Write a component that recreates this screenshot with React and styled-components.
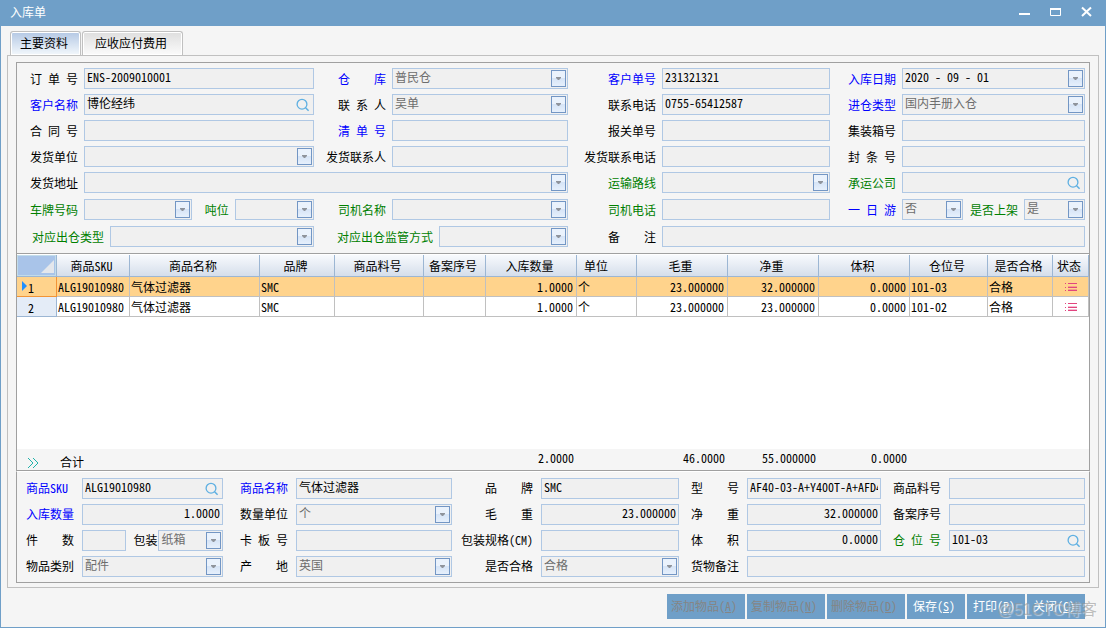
import React, { useId } from 'react';
import styled, { createGlobalStyle, css } from 'styled-components';

const BLUE = '#0000ff';
const GREEN = '#008000';

const GlobalStyle = createGlobalStyle`
  * {
    box-sizing: border-box;
  }
  body {
    margin: 0;
    background: #f5f5f5;
  }
  body, input, select, button, table {
    font-family: "Noto Sans CJK SC", "Liberation Sans", sans-serif;
    font-feature-settings: "hwid";
    font-size: 12px;
    line-height: 16px;
    color: #000;
  }
`;

const Window = styled.div`
  position: relative;
  display: flex;
  flex-direction: column;
  min-height: 100vh;
  background: #f5f5f5;
  border: 1px solid #6f9fc8;
  border-top: 0;
`;
const TitleBar = styled.header`
  display: flex;
  align-items: center;
  justify-content: space-between;
  height: 26px;
  padding: 0 8px 2px 9px;
  background: #6f9fc8;
`;
const Title = styled.h1`
  margin: 0;
  font-size: 12px;
  font-weight: 400;
  color: #fff;
`;
const WindowButtons = styled.div`
  display: flex;
  gap: 11px;
`;
const WindowButton = styled.button`
  display: flex;
  align-items: center;
  justify-content: center;
  width: 20px;
  height: 20px;
  padding: 0;
  border: 0;
  background: none;
`;
const Tabs = styled.div`
  display: flex;
  gap: 1px;
  padding: 5px 9px 0;
`;
const Tab = styled.button`
  height: 24px;
  padding: ${(props) => (props.$active ? '0 12px 2px 9px' : '0 15px 2px 12px')};
  border: 1px solid #c0c0c0;
  border-bottom: 0;
  border-radius: 3px 3px 0 0;
  box-shadow: inset 0 0 0 1px #fff;
  background: ${(props) =>
    props.$active
      ? 'linear-gradient(#b4c8e4, #f3f8fc)'
      : 'linear-gradient(#dedede, #fbfbfb)'};
`;
const Pane = styled.main`
  display: flex;
  flex: 1;
  flex-direction: column;
  margin: 0 6px;
  padding: 6px 8px 4px;
  border: 1px solid #c0c0c0;
`;

const Panel = styled.section`
  display: grid;
  padding-right: 4px;
  border: 1px solid #a0a0a0;
  align-items: end;
`;
const OrderPanel = styled(Panel)`
  grid-template-columns:
    67px minmax(0, 230fr) 78px minmax(0, 176fr)
    94px minmax(0, 168fr) 72px minmax(0, 183fr);
  grid-template-rows: repeat(5, 26px) repeat(2, 27px);
  padding-bottom: 6px;
`;
const ItemPanel = styled(Panel)`
  grid-template-columns:
    65px minmax(0, 141fr) 73px minmax(0, 156fr) 89px minmax(0, 138fr)
    68px minmax(0, 134fr) 68px minmax(0, 136fr);
  grid-template-rows: repeat(4, 26px);
  padding-top: 1px;
  padding-bottom: 5px;
  border-top-color: #fff;
`;

const Label = styled.label`
  display: flex;
  flex: none;
  align-items: center;
  justify-content: flex-end;
  width: ${(props) => props.$width || 'auto'};
  height: 21px;
  padding-right: 6px;
  color: ${(props) => props.$color || '#000'};
  white-space: nowrap;

  ${ItemPanel} & {
    padding-right: ${(props) => (props.$tight ? '1px' : '8px')};
    padding-bottom: 2px;
  }
`;
const LabelText = styled.span`
  min-width: ${(props) => (props.$short ? '24px' : '48px')};
  text-align-last: ${(props) => (props.$spread ? 'justify' : 'left')};
`;
const Group = styled.div`
  display: flex;
  min-width: 0;
  grid-column: span ${(props) => props.$span || 1};
`;
const Box = styled.div`
  display: grid;
  grid-template-columns: minmax(0, 1fr);
  flex: ${(props) => props.$grow || 1} 1 0;
  min-width: 0;
  height: 21px;
  border: 1px solid #b0c8e4;
  background: #f0f0f0;
  grid-column: span ${(props) => props.$span || 1};
`;
const control = css`
  grid-area: 1 / 1;
  width: 100%;
  height: 19px;
  margin: 0;
  border: 0;
  outline: 0;
  border-radius: 0;
  background: none;
`;
const Input = styled.input`
  ${control}
  padding: 0 ${(props) => (props.$icon ? '22px' : '2px')} 4px 2px;
  text-align: ${(props) => (props.$right ? 'right' : 'left')};
`;
const Select = styled.select`
  ${control}
  appearance: none;
  padding: 0 18px 4px 2px;
  color: #6d6d6d;
`;
const Arrow = styled.span`
  grid-area: 1 / 1;
  display: flex;
  align-items: center;
  justify-content: center;
  width: 15px;
  height: 17px;
  margin: 1px;
  justify-self: end;
  border: 1px solid #7396c4;
  background: linear-gradient(#eaf2fc 45%, #d5e3f6 45%, #e6f0fc);
  pointer-events: none;
`;
const SearchButton = styled.button`
  grid-area: 1 / 1;
  display: flex;
  align-items: center;
  justify-content: center;
  justify-self: end;
  width: 21px;
  height: 19px;
  padding: 0;
  border: 0;
  background: none;
`;

const GridArea = styled.section`
  display: flex;
  flex: 1;
  flex-direction: column;
  min-height: 195px;
  padding-top: 1px;
  border: 1px solid #a0a0a0;
  border-top: 0;
  background: #fff;
`;
const Table = styled.table`
  width: 100%;
  table-layout: fixed;
  border-collapse: separate;
  border-spacing: 0;
`;
const HeadCell = styled.th`
  height: 22px;
  padding: ${(props) => (props.$left ? '0 7px' : '0 3px 0 0')};
  border-right: 1px solid #9cb6d3;
  border-bottom: 1px solid #9cb6d3;
  background: linear-gradient(#f8fafd, #d5deeb);
  font-weight: 400;
  text-align: ${(props) => (props.$left ? 'left' : 'center')};
  white-space: nowrap;
`;
const Corner = styled(HeadCell)`
  padding: 0 2px 0 0;
  background: #a9c4e9;
  box-shadow: inset 0 0 0 1px #c2dcea;
  text-align: right;
  line-height: 0;
`;
const Cell = styled.td`
  height: 20px;
  padding: 0 ${(props) => (props.$right ? '3px' : '1px')};
  border-right: 1px solid #c0c0c0;
  border-bottom: 1px solid #c0c0c0;
  text-align: ${(props) => (props.$right ? 'right' : 'left')};
  white-space: nowrap;
  overflow: hidden;
`;
const Row = styled.tr`
  background: ${(props) => (props.$current ? '#ffd38c' : '#fff')};
`;
const RowHead = styled.th`
  height: 20px;
  padding: 2px 0 0 5px;
  border-right: 1px solid ${(props) => (props.$current ? '#f29436' : '#9cb6d3')};
  border-bottom: 1px solid ${(props) => (props.$current ? '#f29436' : '#9cb6d3')};
  background: ${(props) => (props.$current ? '#ffd38c' : '#e4ecf7')};
  font-weight: 400;
  text-align: left;
`;
const RowNumber = styled.span`
  display: flex;
  align-items: center;
  gap: 1px;
  padding-left: ${(props) => (props.$current ? '0' : '6px')};
`;
const Marker = styled.svg`
  margin-bottom: 3px;
`;
const StatusIcon = styled.svg`
  display: block;
  margin: 0 auto;
`;
const Totals = styled(Table)`
  margin-top: auto;
  background: #f5f5f5;
`;
const TotalCell = styled.td`
  height: 21px;
  padding: ${(props) => (props.$icon ? '0 0 2px 10px' : '1px 3px 0')};
  line-height: ${(props) => (props.$icon ? '0' : '16px')};
  text-align: ${(props) => (props.$left ? 'left' : 'right')};
  vertical-align: ${(props) => (props.$left ? 'bottom' : 'top')};
`;

const Actions = styled.footer`
  display: flex;
  justify-content: flex-end;
  gap: 2px;
  padding: 6px 20px 8px;
`;
const Action = styled.button`
  width: ${(props) => (props.$wide ? '78px' : '58px')};
  height: 25px;
  padding: 0 4px 2px 0;
  border: 0;
  background: #6f9fc8;
  color: #fff;
  white-space: nowrap;

  &:disabled {
    color: #858585;
  }
`;
const Watermark = styled.span`
  position: absolute;
  right: 8px;
  bottom: 5px;
  font-family: "Liberation Sans", "Noto Sans CJK SC", sans-serif;
  font-size: 16px;
  line-height: 24px;
  color: rgba(150, 150, 150, 0.6);
  text-shadow: 1px 1px 1px rgba(255, 255, 255, 0.5);
  pointer-events: none;
`;

const FieldLabel = ({ text, ...rest }) => (
  <Label {...rest}>
    <LabelText $spread={text.includes(' ')} $short={text.length < 3}>
      {text}
    </LabelText>
  </Label>
);

const ArrowMark = () => (
  <Arrow>
    <svg width="5" height="3" viewBox="0 0 5 3" aria-hidden="true">
      <path d="M0 0h5v1L3 3H2L0 1z" fill="#8f949c" />
    </svg>
  </Arrow>
);

const FieldBox = ({ id, kind, value = '', span, grow, right }) => (
  <Box $span={span} $grow={grow}>
    {kind === 'select' ? (
      <Select id={id} defaultValue={value}>
        <option value={value}>{value}</option>
      </Select>
    ) : (
      <Input
        id={id}
        type="text"
        defaultValue={value}
        $right={right}
        $icon={kind === 'search' || kind === 'date'}
      />
    )}
    {(kind === 'select' || kind === 'date') && <ArrowMark />}
    {kind === 'search' && (
      <SearchButton type="button" aria-label="查找">
        <svg width="14" height="14" viewBox="0 0 14 14" aria-hidden="true">
          <circle cx="6" cy="6.2" r="4.9" fill="none" stroke="#5fb0e2" strokeWidth="1.3" />
          <path d="M9.6 9.8l3 3" stroke="#5fb0e2" strokeWidth="1.5" />
        </svg>
      </SearchButton>
    )}
  </Box>
);

// label and box as two neighbouring grid cells
const Field = ({ label, color, ...box }) => {
  const id = useId();
  return (
    <>
      <FieldLabel htmlFor={id} text={label} $color={color} />
      <FieldBox id={id} {...box} />
    </>
  );
};

// two fields sharing the place of one
const PairField = ({ first, second, width, tight }) => {
  const firstId = useId();
  const secondId = useId();
  return (
    <>
      <FieldLabel htmlFor={firstId} text={first.label} $color={first.color} />
      <Group>
        <FieldBox id={firstId} {...first} />
        <FieldLabel
          htmlFor={secondId}
          text={second.label}
          $color={second.color}
          $width={width}
          $tight={tight}
        />
        <FieldBox id={secondId} {...second} />
      </Group>
    </>
  );
};

// field with a long label that runs over the label column
const WideField = ({ label, width, ...box }) => {
  const id = useId();
  return (
    <Group $span={2}>
      <FieldLabel htmlFor={id} text={label} $color={GREEN} $width={width} />
      <FieldBox id={id} {...box} />
    </Group>
  );
};

const columns = [
  { title: '商品SKU', width: 73 },
  { title: '商品名称', width: 130 },
  { title: '品牌', width: 75 },
  { title: '商品料号', width: 89 },
  { title: '备案序号', width: 62 },
  { title: '入库数量', width: 91, right: true, total: '2.0000' },
  { title: '单位', width: 60, left: true },
  { title: '毛重', width: 91, right: true, total: '46.0000' },
  { title: '净重', width: 91, right: true, total: '55.000000' },
  { title: '体积', width: 91, right: true, total: '0.0000' },
  { title: '仓位号', width: 78 },
  { title: '是否合格', width: 65 },
];

const rows = [
  ['ALG19010980', '气体过滤器', 'SMC', '', '', '1.0000', '个', '23.000000', '32.000000', '0.0000', '101-03', '合格'],
  ['ALG19010980', '气体过滤器', 'SMC', '', '', '1.0000', '个', '23.000000', '23.000000', '0.0000', '101-02', '合格'],
];

const actions = [
  { text: '添加物品', hotkey: 'A', disabled: true },
  { text: '复制物品', hotkey: 'N', disabled: true },
  { text: '删除物品', hotkey: 'D', disabled: true },
  { text: '保存', hotkey: 'S' },
  { text: '打印', hotkey: 'P' },
  { text: '关闭', hotkey: 'C' },
];

const Columns = () => (
  <colgroup>
    <col width="40" />
    {columns.map((column) => (
      <col key={column.title} width={column.width} />
    ))}
    <col width="36" />
  </colgroup>
);

const ItemGrid = () => (
  <GridArea>
    <Table>
      <Columns />
      <thead>
        <tr>
          <Corner aria-label="全选">
            <svg width="14" height="14" viewBox="0 0 14 14" aria-hidden="true">
              <path d="M14 1v13H1z" fill="#e4e7ec" />
            </svg>
          </Corner>
          {columns.map((column) => (
            <HeadCell key={column.title} $left={column.left}>
              {column.title}
            </HeadCell>
          ))}
          <HeadCell>状态</HeadCell>
        </tr>
      </thead>
      <tbody>
        {rows.map((row, index) => (
          <Row key={row[10]} $current={index === 0}>
            <RowHead scope="row" $current={index === 0}>
              <RowNumber $current={index === 0}>
                {index === 0 && (
                  <Marker width="5" height="10" viewBox="0 0 5 10" aria-hidden="true">
                    <path d="M0 0l5 5-5 5z" fill="#1e8fff" />
                  </Marker>
                )}
                {index + 1}
              </RowNumber>
            </RowHead>
            {row.map((value, i) => (
              <Cell key={columns[i].title} $right={columns[i].right}>
                {value}
              </Cell>
            ))}
            <Cell>
              <StatusIcon width="12" height="10" viewBox="0 0 12 10" aria-label="明细">
                <path d="M0 1.500h1M3 1.500h9M0 5.500h1M3 5.500h9M0 8.500h1M3 8.500h9" stroke="#e2457f" />
                <path d="M3 4.500h9M3 7.500h9" stroke="#e2457f" opacity=".35" />
              </StatusIcon>
            </Cell>
          </Row>
        ))}
      </tbody>
    </Table>
    <Totals>
      <Columns />
      <tbody>
        <tr>
          <TotalCell $left $icon>
            <svg width="12" height="10" viewBox="0 0 12 10" aria-hidden="true">
              <path d="M1 0l5 5-5 5M6 0l5 5-5 5" fill="none" stroke="#20b2aa" />
            </svg>
          </TotalCell>
          <TotalCell $left>合计</TotalCell>
          {columns.slice(1).map((column) => (
            <TotalCell key={column.title}>{column.total}</TotalCell>
          ))}
          <TotalCell />
        </tr>
      </tbody>
    </Totals>
  </GridArea>
);

const App = () => (
  <>
    <GlobalStyle />
    <Window>
      <TitleBar>
        <Title>入库单</Title>
        <WindowButtons>
          <WindowButton type="button" aria-label="最小化">
            <svg width="12" height="12" viewBox="0 0 12 12">
              <path d="M0 8h11" stroke="#fff" strokeWidth="2" />
            </svg>
          </WindowButton>
          <WindowButton type="button" aria-label="最大化">
            <svg width="12" height="12" viewBox="0 0 12 12">
              <path d="M.5 2.5h10v7H.5z" fill="none" stroke="#fff" />
              <path d="M0 3h11" stroke="#fff" strokeWidth="2" />
            </svg>
          </WindowButton>
          <WindowButton type="button" aria-label="关闭窗口">
            <svg width="12" height="12" viewBox="0 0 12 12">
              <path d="M1 1.500l9 8.500M10 1.500l-9 8.500" stroke="#fff" strokeWidth="2" />
            </svg>
          </WindowButton>
        </WindowButtons>
      </TitleBar>
      <Tabs role="tablist">
        <Tab type="button" role="tab" aria-selected="true" $active>
          主要资料
        </Tab>
        <Tab type="button" role="tab" aria-selected="false">
          应收应付费用
        </Tab>
      </Tabs>
      <Pane>
        <OrderPanel>
          <Field label="订 单 号" value="ENS-2009010001" />
          <Field label="仓 库" color={BLUE} kind="select" value="普民仓" />
          <Field label="客户单号" color={BLUE} value="231321321" />
          <Field label="入库日期" color={BLUE} kind="date" value="2020 - 09 - 01" />

          <Field label="客户名称" color={BLUE} kind="search" value="博伦经纬" />
          <Field label="联 系 人" kind="select" value="吴单" />
          <Field label="联系电话" value="0755-65412587" />
          <Field label="进仓类型" color={BLUE} kind="select" value="国内手册入仓" />

          <Field label="合 同 号" />
          <Field label="清 单 号" color={BLUE} />
          <Field label="报关单号" />
          <Field label="集装箱号" />

          <Field label="发货单位" kind="select" />
          <Field label="发货联系人" />
          <Field label="发货联系电话" />
          <Field label="封 条 号" />

          <Field label="发货地址" kind="select" span={3} />
          <Field label="运输路线" color={GREEN} kind="select" />
          <Field label="承运公司" color={GREEN} kind="search" />

          <PairField
            first={{ label: '车牌号码', color: GREEN, kind: 'select', grow: 108 }}
            second={{ label: '吨位', color: GREEN, kind: 'select', grow: 79 }}
            width="43px"
          />
          <Field label="司机名称" color={GREEN} kind="select" />
          <Field label="司机电话" color={GREEN} />
          <PairField
            first={{ label: '一 日 游', color: BLUE, kind: 'select', value: '否' }}
            second={{ label: '是否上架', color: GREEN, kind: 'select', value: '是' }}
            width="61px"
          />

          <WideField label="对应出仓类型" width="93px" kind="select" />
          <WideField label="对应出仓监管方式" width="125px" kind="select" />
          <Field label="备 注" span={3} />
        </OrderPanel>

        <ItemGrid />

        <ItemPanel>
          <Field label="商品SKU" color={BLUE} kind="search" value="ALG19010980" />
          <Field label="商品名称" color={BLUE} value="气体过滤器" />
          <Field label="品 牌" value="SMC" />
          <Field label="型 号" value="AF40-03-A+Y400T-A+AFD40" />
          <Field label="商品料号" />

          <Field label="入库数量" color={BLUE} value="1.0000" right />
          <Field label="数量单位" kind="select" value="个" />
          <Field label="毛 重" value="23.000000" right />
          <Field label="净 重" value="32.000000" right />
          <Field label="备案序号" />

          <PairField
            first={{ label: '件 数', grow: 44 }}
            second={{ label: '包装', kind: 'select', value: '纸箱', grow: 65 }}
            width="32px"
            tight
          />
          <Field label="卡 板 号" />
          <Field label="包装规格(CM)" />
          <Field label="体 积" value="0.0000" right />
          <Field label="仓 位 号" color={GREEN} kind="search" value="101-03" />

          <Field label="物品类别" kind="select" value="配件" />
          <Field label="产 地" kind="select" value="英国" />
          <Field label="是否合格" kind="select" value="合格" />
          <Field label="货物备注" span={3} />
        </ItemPanel>
      </Pane>
      <Actions>
        {actions.map(({ text, hotkey, disabled }) => (
          <Action key={hotkey} type="button" disabled={disabled} $wide={disabled}>
            {text}(<u>{hotkey}</u>)
          </Action>
        ))}
      </Actions>
      <Watermark>@51CTO博客</Watermark>
    </Window>
  </>
);

export default App;
